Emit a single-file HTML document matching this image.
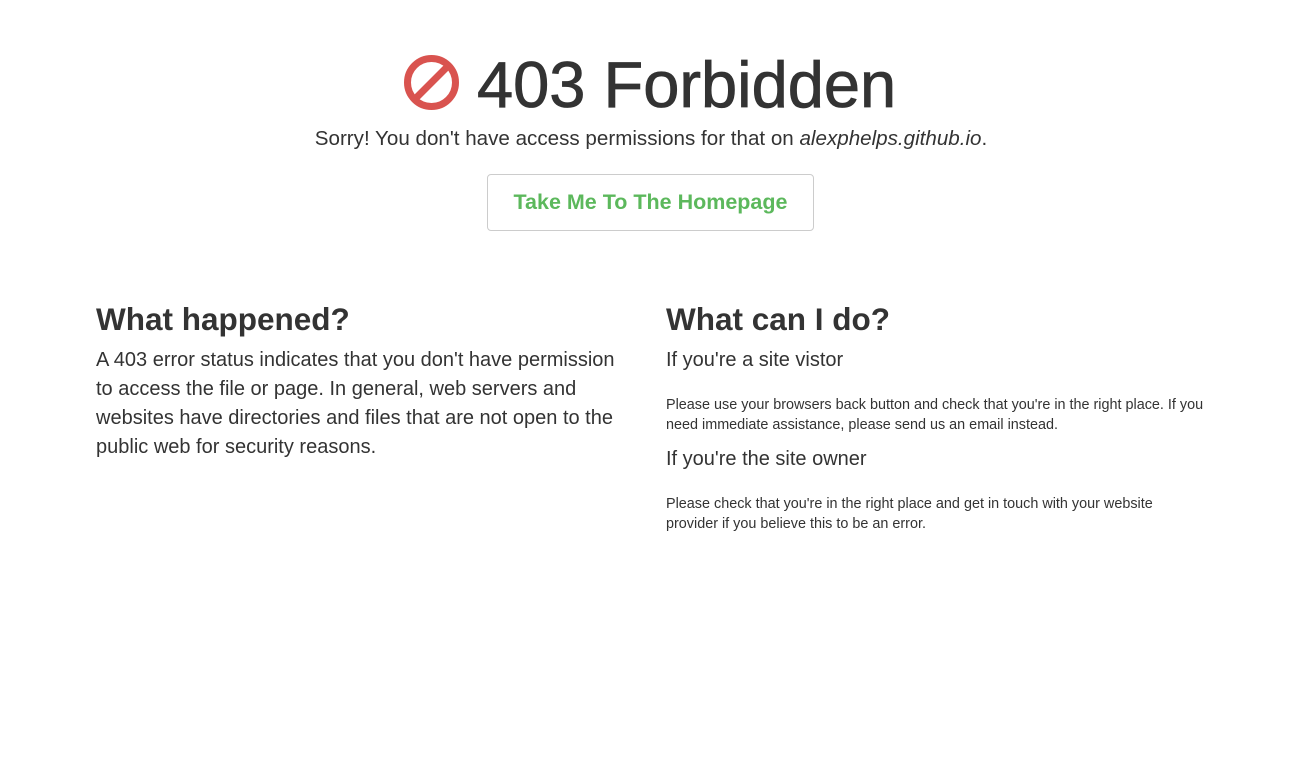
<!DOCTYPE html>
<html><head><meta charset="utf-8"><style>
body{margin:0;background:#fff;font-family:"Liberation Sans",Arial,sans-serif;color:#333;width:1308px;height:767px;position:relative;overflow:hidden}
.a{position:absolute;white-space:nowrap}
h1{margin:0;font-size:65px;font-weight:normal;line-height:1;-webkit-text-stroke:0.8px #333}
h2{margin:0;font-size:31.5px;font-weight:bold;line-height:1}
.btn{position:absolute;left:487px;top:174px;width:325px;height:55px;border:1px solid #ccc;border-radius:4px;color:#5cb85c;font-weight:bold;font-size:21.5px;text-align:center;line-height:55px}
.p{position:absolute;font-size:20px;line-height:29px}
.s{position:absolute;font-size:14.4px;line-height:20px}
</style></head><body>
<svg class="a" style="left:403px;top:54px" width="57" height="57" viewBox="0 0 57 57"><circle cx="28.5" cy="28.5" r="24" fill="none" stroke="#d9534f" stroke-width="7"/><line x1="44" y1="13" x2="13" y2="44" stroke="#d9534f" stroke-width="7"/></svg>
<h1 class="a" style="left:477px;top:52px">403 Forbidden</h1>
<div class="a" style="left:0;width:1302px;text-align:center;top:127px;font-size:20.6px">Sorry! You don't have access permissions for that on <i>alexphelps.github.io</i>.</div>
<div class="btn">Take Me To The Homepage</div>
<h2 class="a" style="left:96px;top:304px">What happened?</h2>
<div class="p" style="left:96px;top:346px;width:538px">A 403 error status indicates that you don't have permission to access the file or page. In general, web servers and websites have directories and files that are not open to the public web for security reasons.</div>
<h2 class="a" style="left:666px;top:304px">What can I do?</h2>
<div class="a" style="left:666px;top:349px;font-size:20px">If you're a site vistor</div>
<div class="s" style="left:666px;top:395px;width:548px">Please use your browsers back button and check that you're in the right place. If you need immediate assistance, please send us an email instead.</div>
<div class="a" style="left:666px;top:448px;font-size:20px">If you're the site owner</div>
<div class="s" style="left:666px;top:494px;width:520px">Please check that you're in the right place and get in touch with your website provider if you believe this to be an error.</div>
</body></html>
